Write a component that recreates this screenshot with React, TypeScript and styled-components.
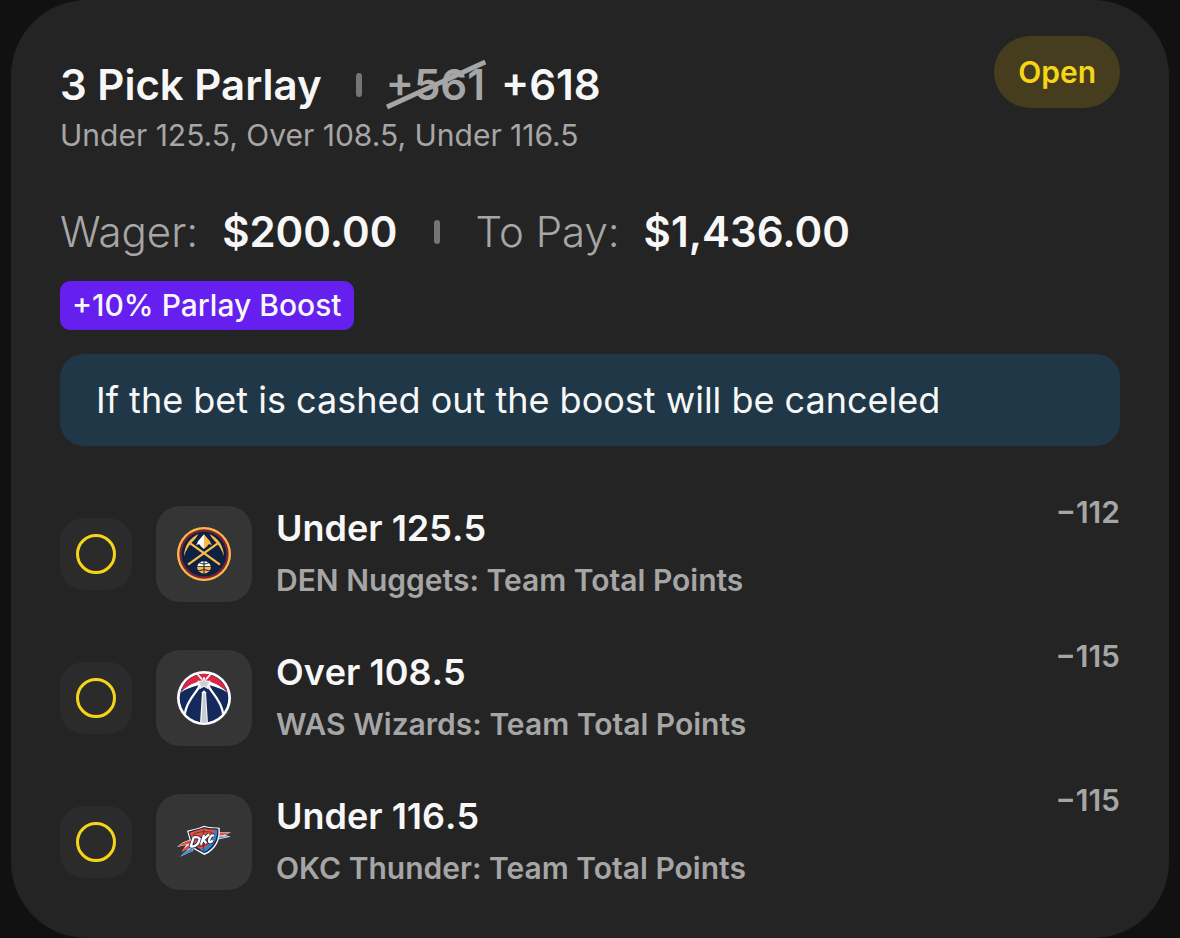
import React from "react";
import styled, { createGlobalStyle } from "styled-components";

const GlobalStyle = createGlobalStyle`
  *, *::before, *::after { box-sizing: border-box; }
  body {
    margin: 0;
    background: #111111;
    font-family: Inter, "Liberation Sans", sans-serif;
    font-optical-sizing: none;
    color: #f7f7f7;
  }
`;

const Page = styled.main`
  padding: 0 11px;
`;

const Card = styled.article`
  padding: 36px 49px;
  border-radius: 76px;
  background: #242424;
`;

const Header = styled.header`
  display: flex;
  justify-content: space-between;
  align-items: flex-start;
`;

const Heading = styled.div`
  padding-top: 23px;
`;

const Line = styled.div`
  display: flex;
  align-items: center;
  line-height: 52px;
  font-size: 42px;
  font-weight: 600;
  white-space: nowrap;
`;

const Title = styled.h1`
  margin: 0;
  font-size: 42px;
  font-weight: 600;
`;

const Divider = styled.span<{ $before: number; $after: number }>`
  width: 6px;
  height: 24px;
  margin: 0 ${(p) => p.$after}px 0 ${(p) => p.$before}px;
  border-radius: 3px;
  background: #757575;
`;

const OldOdds = styled.s`
  position: relative;
  margin-right: 16px;
  color: #a6a6a6;
  text-decoration: none;
`;

const Slash = styled.svg`
  position: absolute;
  top: 0;
  left: 0;
  width: 100%;
  height: 100%;
  overflow: visible;
`;

const Summary = styled.p`
  margin: 0;
  line-height: 48px;
  font-size: 30px;
  font-weight: 400;
  color: #a6a6a6;
`;

const Status = styled.button`
  height: 72px;
  padding: 0 24px;
  border: 0;
  border-radius: 36px;
  background: #463d1e;
  color: #f6d517;
  font-family: inherit;
  font-size: 30px;
  font-weight: 600;
`;

const Stakes = styled(Line)`
  margin-top: 47px;
`;

const Label = styled.span`
  margin-right: 24px;
  font-weight: 350;
  color: #a6a6a6;
`;

const Boost = styled.div`
  width: fit-content;
  margin-top: 23px;
  padding: 0 12px;
  border-radius: 10px;
  background: #651fee;
  line-height: 49px;
  font-size: 30px;
  font-weight: 550;
`;

const Note = styled.p`
  margin: 24px 0 0;
  padding: 0 36px;
  border-radius: 24px;
  background: #203747;
  line-height: 92px;
  font-size: 36px;
  font-weight: 400;
`;

const Legs = styled.ul`
  display: flex;
  flex-direction: column;
  gap: 24px;
  margin: 48px 0 0;
  padding: 0;
  list-style: none;
`;

const Leg = styled.li`
  display: flex;
  align-items: center;
  gap: 24px;
`;

const Pending = styled.span`
  display: grid;
  place-items: center;
  width: 72px;
  height: 72px;
  border-radius: 24px;
  background: #2b2b2b;

  &::before {
    content: "";
    width: 40px;
    height: 40px;
    border: 3px solid #f6d517;
    border-radius: 50%;
  }
`;

const Tile = styled.span`
  display: grid;
  place-items: center;
  width: 96px;
  height: 96px;
  border-radius: 24px;
  background: #353535;
`;

const Logo = styled.svg`
  width: 54px;
  height: 54px;
  overflow: visible;
`;

const LegText = styled.div`
  flex: 1;
  min-width: 0;
  padding: 8px 0;
`;

const Pick = styled.h2`
  margin: 0;
  line-height: 52px;
  font-size: 36px;
  font-weight: 600;
  font-kerning: none;
`;

const Market = styled.p`
  margin: 0;
  line-height: 52px;
  font-size: 30px;
  font-weight: 600;
  color: #a6a6a6;
`;

const Odds = styled.span`
  align-self: flex-start;
  line-height: 36px;
  font-size: 30px;
  font-weight: 600;
  font-kerning: none;
  color: #a6a6a6;
`;

const Nuggets = () => (
  <Logo viewBox="39 39 162 162" role="img" aria-label="Denver Nuggets">
    <circle cx="120" cy="120" r="81" fill="#fdb948" />
    <circle cx="120" cy="120" r="74" fill="#7b2036" />
    <circle cx="120" cy="120" r="67" fill="#0d2240" />
    <g fill="#fdb948">
      <path d="M103 60 C78 72 61 94 60 127 C66 108 76 92 87 82 C94 75 99 68 103 60 Z" />
      <path d="M137 60 C162 72 179 94 180 127 C174 108 164 92 153 82 C146 75 141 68 137 60 Z" />
    </g>
    <path d="M79 88 L168 152 M161 88 L72 152" stroke="#fdb948" strokeWidth="7" />
    <path d="M120 61 L102 82 L97 94 L105 90 L112 98 L120 105 Z" fill="#fff" />
    <path d="M120 61 L138 82 L143 94 L135 90 L128 98 L120 105 Z" fill="#fdb948" />
    <path d="M100 156 A21 21 0 0 1 140 156 Z" fill="#fff" />
    <path d="M99 158 A21 21 0 0 0 141 158 Z" fill="#fdb948" />
    <path d="M120 136 V180 M104 145 Q120 155 136 145 M103 171 Q120 162 137 171" fill="none" stroke="#0d2240" strokeWidth="3" />
  </Logo>
);

const Wizards = () => (
  <Logo viewBox="39 39 162 162" role="img" aria-label="Washington Wizards">
    <circle cx="120" cy="120" r="81" fill="#fff" />
    <circle cx="120" cy="120" r="73" fill="#142a5c" />
    <path d="M51 99 C61 68 88 48 120 47 C152 48 179 68 189 99 C174 86 156 79 136 76 L104 76 C84 79 66 86 51 99 Z" fill="#dc2642" />
    <path d="M49 104 C64 87 84 75 106 71 L108 80 C86 85 66 92 49 104 Z M191 104 C176 87 156 75 134 71 L132 80 C154 85 174 92 191 104 Z" fill="#fff" />
    <path d="M107 79 C105 101 69 119 62 170 M133 79 C135 101 171 119 178 170" fill="none" stroke="#fff" strokeWidth="7" />
    <path d="M100 48 L114 64 M140 48 L126 64" stroke="#fff" strokeWidth="5" />
    <path d="M120 58 L125 69 L139 70 L129 79 L133 92 L120 85 L107 92 L111 79 L101 70 L115 69 Z" fill="#c4ced4" stroke="#fff" strokeWidth="3" />
    <path d="M114 103 L120 97 L126 103 L132 198 H108 Z" fill="#fff" />
    <path d="M117 108 L120 103 L124 109 L129 194 H112 Z" fill="#c4ced4" />
  </Logo>
);

const Thunder = () => (
  <Logo viewBox="39 39 162 162" role="img" aria-label="Oklahoma City Thunder">
    <path d="M82 112 C65 116 51 123 39 135 L66 129 L53 149 L78 136 L48 164 L88 146 Z" fill="#d9dde3" />
    <path d="M80 115 C65 119 52 125 43 133 L69 127 L81 123 Z M77 128 L61 139 L53 148 L80 138 Z" fill="#ef4b35" />
    <path d="M83 139 L60 151 L50 162 L88 147 Z" fill="#3e91d2" />
    <path d="M160 91 L201 91 L184 99 L200 104 L159 113 Z" fill="#d9dde3" />
    <path d="M161 93 L197 92 L178 99 L159 102 Z" fill="#ef4b35" />
    <path d="M159 104 L195 103 L158 111 Z" fill="#3e91d2" />
    <path d="M69 86 C91 80 106 78 120 71 C134 76 151 75 167 77 C170 114 157 143 121 159 C106 151 92 144 83 135 Z" fill="#fff" />
    <path d="M73 89 C93 83 107 81 120 75 C134 80 149 78 163 80 C166 112 153 140 121 154 C107 147 95 141 87 133 Z" fill="#11264a" />
    <path d="M77 92 C95 86 108 84 120 79 C132 83 143 83 155 83 C157 108 145 132 121 146 C109 142 98 136 91 130 Z" fill="#ef5036" />
    <path d="M152 83 L160 84 C161 108 150 135 121 150 L106 143 C134 136 151 114 152 83 Z" fill="#2f83c8" />
    <path d="M86 98 C103 88 121 88 145 91 M102 132 C119 136 134 126 142 116 M119 82 V146" fill="none" stroke="#11264a" strokeWidth="2" />
    <g fill="none" strokeLinejoin="round">
      <g stroke="#11264a" strokeWidth="12">
        <path d="M89 106 L80 133 C98 136 105 122 107 110 C104 105 96 105 89 106 M120 99 L111 128 M135 97 L118 113 L127 124 M150 101 C140 95 133 116 136 120 C139 122 144 119 146 115" />
      </g>
      <g stroke="#fff" strokeWidth="7">
        <path d="M89 106 L80 133 C98 136 105 122 107 110 C104 105 96 105 89 106 M120 99 L111 128 M135 97 L118 113 L127 124 M150 101 C140 95 133 116 136 120 C139 122 144 119 146 115" />
      </g>
    </g>
  </Logo>
);

const legs = [
  { pick: "Under 125.5", market: "DEN Nuggets: Team Total Points", odds: "−112", logo: <Nuggets /> },
  { pick: "Over 108.5", market: "WAS Wizards: Team Total Points", odds: "−115", logo: <Wizards /> },
  { pick: "Under 116.5", market: "OKC Thunder: Team Total Points", odds: "−115", logo: <Thunder /> },
];

export default function App() {
  return (
    <>
      <GlobalStyle />
      <Page>
        <Card>
          <Header>
            <Heading>
              <Line>
                <Title>3 Pick Parlay</Title>
                <Divider $before={34} $after={24} />
                <OldOdds>
                  +561
                  <Slash viewBox="0 0 100 52" preserveAspectRatio="none" aria-hidden="true">
                    <path d="M1 48 L100 3" stroke="#a6a6a6" strokeWidth="5" />
                  </Slash>
                </OldOdds>
                <span>+618</span>
              </Line>
              <Summary>Under 125.5, Over 108.5, Under 116.5</Summary>
            </Heading>
            <Status type="button">Open</Status>
          </Header>
          <Stakes>
            <Label>Wager:</Label>
            <span>$200.00</span>
            <Divider $before={36} $after={36} />
            <Label>To Pay:</Label>
            <span>$1,436.00</span>
          </Stakes>
          <Boost>+10% Parlay Boost</Boost>
          <Note>If the bet is cashed out the boost will be canceled</Note>
          <Legs>
            {legs.map((leg) => (
              <Leg key={leg.market}>
                <Pending role="img" aria-label="Pending" />
                <Tile>{leg.logo}</Tile>
                <LegText>
                  <Pick>{leg.pick}</Pick>
                  <Market>{leg.market}</Market>
                </LegText>
                <Odds>{leg.odds}</Odds>
              </Leg>
            ))}
          </Legs>
        </Card>
      </Page>
    </>
  );
}
